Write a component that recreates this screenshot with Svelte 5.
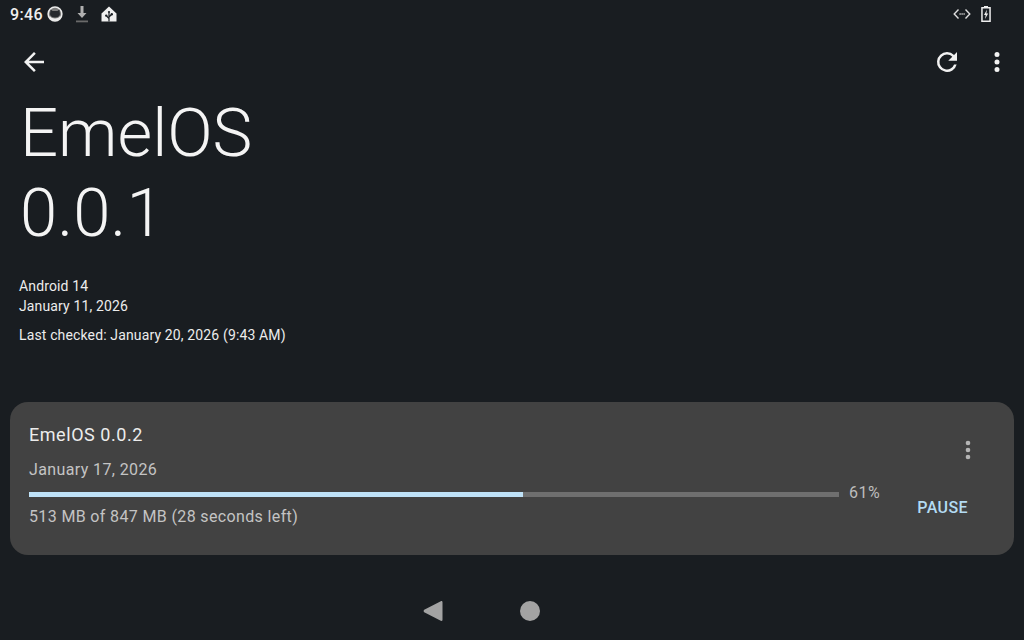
<script>
  const percent = 61;
</script>

<div class="screen">
  <header class="status">
    <div class="status-left">
      <span class="clock">9:46</span>
      <svg class="st-cat" viewBox="0 0 16 16" width="16" height="16"><circle cx="8" cy="8" r="6.900" fill="#7c7c7c" stroke="#ececec" stroke-width="1.500"/><path d="M3.600 3.400 5.600 5h4.800l2-1.600.6 4.800C12.600 10.400 10.400 11.400 8 11.400S3.400 10.400 3 8.200z" fill="#26292d"/><path d="M2.500 9.500C4 12 6 12.400 8 12.400s4-.4 5.500-2.900L13 12.500 10.500 14.500h-5L3 12.500z" fill="#ececec"/></svg>
      <svg class="st-dl" viewBox="0 0 14 18" width="14" height="18"><path d="M5.500 1h3v7h3L7 13 2.500 8h3z" fill="#b0b0b0"/><rect x="1" y="15.500" width="12" height="1.800" fill="#6a6a6a"/></svg>
      <svg class="st-home" viewBox="0 0 16 16" width="16" height="16"><path d="M8 .5 15.500 7.500V15.500H.5V7.500z" fill="#f0f0f0"/><path d="M8 15.500V6.500M8 12.500 5.600 10M8 11l2.500-2.500" stroke="#1a1f24" stroke-width="1.200" fill="none"/><circle cx="5.200" cy="9.600" r="1.200" fill="#1a1f24"/><circle cx="10.800" cy="8.200" r="1.200" fill="#1a1f24"/><circle cx="8" cy="6" r="1.100" fill="#1a1f24"/></svg>
    </div>
    <div class="status-right">
      <svg viewBox="0 0 18 12" width="18" height="12"><path d="M5.500 1.500 1.200 6l4.300 4.500M12.500 1.500 16.800 6l-4.300 4.500" fill="none" stroke="#ddd" stroke-width="1.400"/><path d="M6.500 6h1.200M8.500 6h1.200M10.500 6h1.200" stroke="#ddd" stroke-width="1.300"/></svg>
      <svg viewBox="0 0 10 16" width="10" height="16"><path d="M3 0h4v1h2.800v15H.2V1H3z" fill="#eee"/><path d="M1.700 2.500h6.600v12H1.700z" fill="#1a1f24"/><path d="M6 3.500 3 9h1.700l-.7 4L7.200 7.500H5.400z" fill="#eee"/></svg>
    </div>
  </header>

  <nav class="toolbar">
    <svg viewBox="0 0 24 24" width="30" height="30"><path d="M20 11H7.830l5.590-5.590L12 4l-8 8 8 8 1.410-1.410L7.830 13H20z" fill="#f2f2f2"/></svg>
    <div class="actions">
      <svg viewBox="0 0 24 24" width="30" height="30"><path d="M17.650 6.350A7.960 7.960 0 0 0 12 4a8 8 0 1 0 7.730 10h-2.080A6 6 0 1 1 12 6c1.660 0 3.140.69 4.220 1.780L13 11h7V4z" fill="#f2f2f2"/></svg>
      <svg viewBox="0 0 24 24" width="30" height="30"><path d="M12 8a2 2 0 1 0 0-4 2 2 0 0 0 0 4m0 2a2 2 0 1 0 0 4 2 2 0 0 0 0-4m0 6a2 2 0 1 0 0 4 2 2 0 0 0 0-4" fill="#f2f2f2"/></svg>
    </div>
  </nav>

  <section class="current">
    <h1>EmelOS<br />0.0.1</h1>
    <div class="meta">
      <p>Android 14</p>
      <p>January 11, 2026</p>
      <p class="checked">Last checked: January 20, 2026 (9:43 AM)</p>
    </div>
  </section>

  <section class="card">
    <div class="card-main">
      <div class="title">EmelOS 0.0.2</div>
      <div class="date">January 17, 2026</div>
      <div class="progress-row">
        <div class="track"><div class="fill" style="width: {(494 / 810) * 100}%"></div></div>
        <span class="pct">{percent}%</span>
      </div>
      <div class="size">513 MB of 847 MB (28 seconds left)</div>
    </div>
    <div class="card-side">
      <svg viewBox="0 0 24 24" width="28" height="28"><path d="M12 8a2 2 0 1 0 0-4 2 2 0 0 0 0 4m0 2a2 2 0 1 0 0 4 2 2 0 0 0 0-4m0 6a2 2 0 1 0 0 4 2 2 0 0 0 0-4" fill="#b4b4b4"/></svg>
      <span class="pause">PAUSE</span>
    </div>
  </section>

  <footer class="navbar">
    <svg viewBox="0 0 20 22" width="20" height="22"><path d="M19.500 2.200v17.600c0 1-.9 1.500-1.700 1L1.200 12.200c-.7-.5-.7-1.900 0-2.400L17.800 1.200c.8-.5 1.700 0 1.700 1z" fill="#a3a3a3"/></svg>
    <span class="home"></span>
  </footer>
</div>

<style>
  :global(body) {
    margin: 0;
    background: #191d21;
  }
  .screen {
    width: 1024px;
    height: 640px;
    overflow: hidden;
    background: #191d21;
    color: #f2f2f2;
    font-family: Roboto, "Liberation Sans", sans-serif;
    display: flex;
    flex-direction: column;
  }
  .status {
    height: 28px;
    display: flex;
    align-items: center;
    justify-content: space-between;
    padding: 0 33px 0 10px;
  }
  .status-left, .status-right {
    display: flex;
    align-items: center;
  }
  .clock {
    font-size: 16px;
    font-weight: 500;
    color: #efefef;
    letter-spacing: 0.4px;
  }
  .st-cat { margin-left: 4px; }
  .st-dl { margin-left: 12px; }
  .st-home { margin-left: 12px; }
  .status-right { gap: 10px; }
  .toolbar {
    height: 56px;
    margin-top: 6px;
    display: flex;
    align-items: center;
    justify-content: space-between;
    padding: 0 12px 0 19px;
  }
  .actions {
    display: flex;
    gap: 20px;
  }
  .current { padding: 0 19px; }
  h1 {
    margin: 0;
    font-size: 67px;
    font-weight: 300;
    line-height: 80px;
    padding: 3px 0 0 1px;
    color: #f4f4f4;
  }
  .meta {
    margin-top: 23px;
    font-size: 14px;
    line-height: 20px;
    letter-spacing: 0.14px;
    color: #ececec;
  }
  .meta p { margin: 0; }
  .meta .checked { margin-top: 9px; }
  .card {
    margin: 57px 10px 0;
    height: 153px;
    box-sizing: border-box;
    border-radius: 18px;
    background: #424242;
    display: flex;
    padding: 0 46px 0 19px;
  }
  .card-main { flex: 1; padding-top: 22px; }
  .title {
    font-size: 18px;
    line-height: 22px;
    letter-spacing: 0.55px;
    color: #ececec;
  }
  .date {
    font-size: 16px;
    line-height: 20px;
    letter-spacing: 0.38px;
    margin-top: 14px;
    color: #c4c4c4;
  }
  .progress-row {
    display: flex;
    align-items: center;
    margin-top: 3px;
  }
  .track {
    width: 810px;
    height: 5px;
    background: #6f6f6f;
  }
  .fill {
    height: 100%;
    background: #bfe2f8;
  }
  .pct {
    margin: 0 0 2px 10px;
    font-size: 16px;
    line-height: 20px;
    letter-spacing: 0.5px;
    color: #bdbdbd;
  }
  .size {
    font-size: 16px;
    line-height: 20px;
    letter-spacing: 0.36px;
    color: #c4c4c4;
    margin-top: 2px;
  }
  .card-side {
    width: 82px;
    display: flex;
    flex-direction: column;
    align-items: flex-end;
    padding-top: 34px;
    box-sizing: border-box;
  }
  .card-side svg { margin-right: -14px; }
  .pause {
    margin-top: 34px;
    font-size: 16px;
    font-weight: 500;
    line-height: 20px;
    letter-spacing: 0.4px;
    color: #b3dbf3;
  }
  .navbar {
    flex: 1;
    display: flex;
    align-items: center;
    padding: 27px 0 0 423px;
    gap: 77px;
  }
  .home {
    width: 20px;
    height: 20px;
    border-radius: 50%;
    background: #a3a3a3;
  }
</style>
